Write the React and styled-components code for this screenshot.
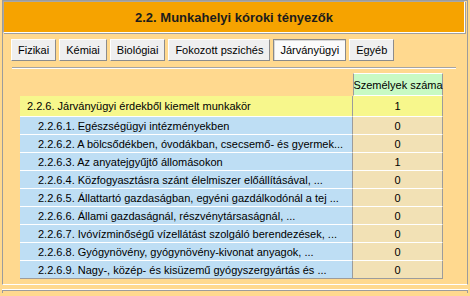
import styled, { createGlobalStyle } from 'styled-components';

const GlobalStyle = createGlobalStyle`
  html, body {
    margin: 0;
    padding: 0;
    background: #ffd98f;
  }
  body {
    font-family: "Liberation Sans", Arial, sans-serif;
    font-size: 11px;
    color: #000;
    overflow: hidden;
  }
`;

const Panel = styled.div`
  margin: 0 2px;
  border: 1px solid #9c9c9c;
  border-bottom-color: #fff;
  padding-bottom: 5px;
`;

const Header = styled.div`
  height: 30px;
  margin-right: 2px;
  background: #f6a300;
  border: 1px solid;
  border-color: #a8a8a8 #fff #fff #a8a8a8;
  box-shadow: 1px 1px 0 #a0a0a0;
  display: flex;
  align-items: center;
  justify-content: center;
  font-weight: bold;
  font-size: 13px;
  color: #1c1c1c;
`;

const Tabs = styled.div`
  display: flex;
  gap: 3px;
  margin-top: 6px;
  padding-left: 8px;
`;

const Tab = styled.div`
  padding: 4px 6px 3px;
  line-height: 13px;
  background: ${p => (p.$active ? '#fbfbfb' : '#efefef')};
  border: 1px solid;
  border-color: ${p => (p.$active ? '#8a8a8a' : '#fff #8c8c8c #8c8c8c #fff')};
  box-shadow: ${p => (p.$active ? 'inset 1px 1px 0 #d8d8d8' : 'none')};
  white-space: nowrap;
`;

const Rule = styled.div`
  margin: 6px 11px 0 9px;
  border-top: 1px solid #a4a4a4;
  border-bottom: 1px solid #fff;
`;

const Table = styled.div`
  margin: 4px 0 0 17px;
  width: 423px;
  display: flex;
  flex-direction: column;
`;

const Row = styled.div`
  display: grid;
  grid-template-columns: 333px 90px;
  height: ${p => p.$h}px;
  &:last-child > div {
    border-bottom-color: #9c9c9c;
  }
`;

const Blank = styled.div``;

const HeadCell = styled.div`
  background: #c8fac4;
  border-top: 1px solid #fff;
  border-left: 1px solid #9c9c9c;
  border-right: 1px solid #9c9c9c;
  border-bottom: 1px solid #fff;
  display: flex;
  align-items: center;
  justify-content: center;
  white-space: nowrap;
`;

const Label = styled.div`
  background: ${p => (p.$main ? '#f7f78c' : '#bedef4')};
  padding-left: ${p => (p.$main ? 7 : 18)}px;
  border-right: 1px solid #9c9c9c;
  border-bottom: 1px solid #fff;
  display: flex;
  align-items: center;
  white-space: nowrap;
  overflow: hidden;
`;

const Value = styled.div`
  background: ${p => (p.$main ? '#f7f78c' : '#f2e1b5')};
  border-right: 1px solid #9c9c9c;
  border-bottom: 1px solid #fff;
  display: flex;
  align-items: center;
  justify-content: center;
`;

const NextPanel = styled.div`
  margin: 5px 2px 0;
  height: 2px;
  border-top: 1px solid #9c9c9c;
  box-shadow: 0 -1px 0 #fff;
  border-left: 1px solid #9c9c9c;
  border-right: 1px solid #9c9c9c;
`;

const tabs = ['Fizikai', 'Kémiai', 'Biológiai', 'Fokozott pszichés', 'Járványügyi', 'Egyéb'];

const rows = [
  { label: '2.2.6.1. Egészségügyi intézményekben', value: 0 },
  { label: '2.2.6.2. A bölcsődékben, óvodákban, csecsemő- és gyermek...', value: 0 },
  { label: '2.2.6.3. Az anyatejgyűjtő állomásokon', value: 1 },
  { label: '2.2.6.4. Közfogyasztásra szánt élelmiszer előállításával, ...', value: 0 },
  { label: '2.2.6.5. Állattartó gazdaságban, egyéni gazdálkodónál a tej ...', value: 0 },
  { label: '2.2.6.6. Állami gazdaságnál, részvénytársaságnál, ...', value: 0 },
  { label: '2.2.6.7. Ivóvízminőségű vízellátást szolgáló berendezések, ...', value: 0 },
  { label: '2.2.6.8. Gyógynövény, gyógynövény-kivonat anyagok, ...', value: 0 },
  { label: '2.2.6.9. Nagy-, közép- és kisüzemű gyógyszergyártás és ...', value: 0 },
];

const App = () => {
  return (
    <>
      <GlobalStyle />
      <Panel>
        <Header>2.2. Munkahelyi kóroki tényezők</Header>
        <Tabs>
          {tabs.map(t => (
            <Tab key={t} $active={t === 'Járványügyi'}>{t}</Tab>
          ))}
        </Tabs>
        <Rule />
        <Table>
          <Row $h={23}>
            <Blank />
            <HeadCell>Személyek száma</HeadCell>
          </Row>
          <Row $h={21}>
            <Label $main>2.2.6. Járványügyi érdekből kiemelt munkakör</Label>
            <Value $main>1</Value>
          </Row>
          {rows.map(r => (
            <Row key={r.label} $h={18}>
              <Label>{r.label}</Label>
              <Value>{r.value}</Value>
            </Row>
          ))}
        </Table>
      </Panel>
      <NextPanel />
    </>
  );
};

export default App;
